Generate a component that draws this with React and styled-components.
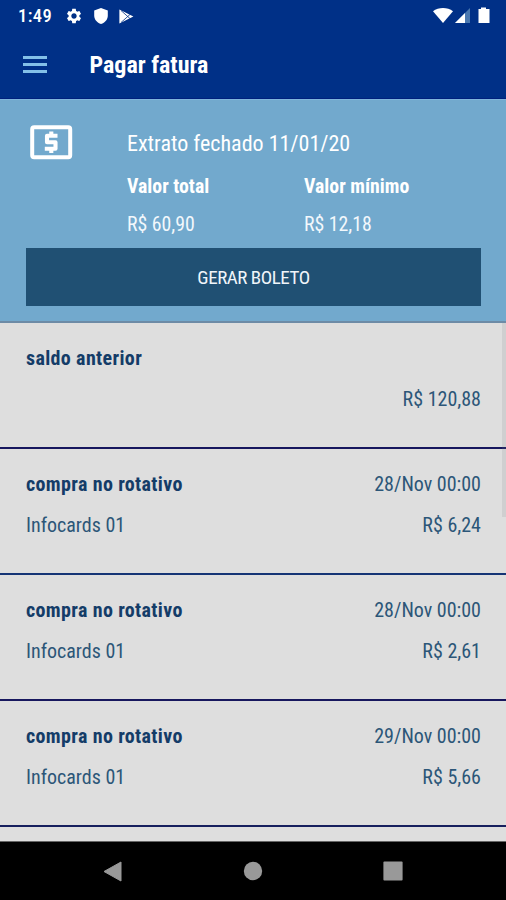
import styled, { createGlobalStyle } from "styled-components";

const GlobalStyle = createGlobalStyle`
    * {
        box-sizing: border-box;
    }
    body {
        margin: 0;
        background-color: #000;
        font-family: "Roboto Condensed", Roboto, sans-serif;
        font-stretch: 75%;
    }
`;

const Screen = styled.div`
    display: flex;
    flex-direction: column;
    width: 506px;
    height: 900px;
    overflow: hidden;
`;

const StatusBar = styled.div`
    display: flex;
    align-items: center;
    height: 32px;
    padding: 0 16px 0 18px;
    background-color: #003087;
    color: #fff;
`;

const Clock = styled.span`
    width: 47px;
    font-size: 18.5px;
    font-weight: 500;
    font-stretch: 100%;
    letter-spacing: 0.4px;
    line-height: 32px;
`;

const StatusIcons = styled.div`
    display: flex;
    align-items: center;
    gap: ${({ $gap }) => $gap}px;
    margin-left: ${({ $end }) => ($end ? "auto" : "0")};
`;

const AppBar = styled.header`
    display: flex;
    align-items: center;
    height: 67px;
    padding: 0 23px;
    background-color: #003087;
    border-bottom: 1px solid #00207c;
`;

const MenuButton = styled.div`
    display: flex;
    flex-direction: column;
    gap: 4px;
    width: 24px;
    margin: -2px 42.5px 0 0;
`;

const MenuLine = styled.span`
    height: 3px;
    background-color: #83c0e8;
`;

const Title = styled.h1`
    margin: 0;
    color: #fff;
    font-size: 24px;
    font-weight: 700;
    line-height: 28px;
`;

const Summary = styled.section`
    height: 224px;
    padding: 25px 25px 0 26px;
    background-color: #72a9cd;
    border-top: 1px solid #7eb5dc;
    border-bottom: 2px solid #6d8ba6;
    color: #fff;
`;

const SummaryTop = styled.div`
    display: grid;
    grid-template-columns: 101px 177px 1fr;
    grid-template-rows: 40px 38px 45px;
`;

const IconCell = styled.div`
    grid-row: span 3;
    padding-left: 4px;
`;

const Statement = styled.div`
    grid-column: span 2;
    font-size: 22px;
    line-height: 37px;
`;

const Amount = styled.div`
    color: ${({ $bold }) => ($bold ? "#fff" : "#f2f8fc")};
    font-size: 19.8px;
    font-weight: ${({ $bold }) => ($bold ? 700 : 400)};
    line-height: 43px;
`;

const PayButton = styled.button`
    display: block;
    width: 455px;
    height: 58px;
    padding: 2px 0 0;
    border: 0;
    background-color: #205073;
    color: #f0f5fa;
    font-family: inherit;
    font-stretch: inherit;
    font-size: 19px;
    letter-spacing: -0.45px;
    line-height: 56px;
`;

const List = styled.div`
    display: flex;
    flex: 1;
    position: relative;
    flex-direction: column;
    min-height: 0;
    overflow: hidden;
    background-color: #dedede;
`;

const Entry = styled.div`
    flex: none;
    height: 126px;
    padding: 15px 25px 0 26px;
    border-bottom: 2px solid ${({ $line }) => $line};
    color: #2c5678;
`;

const Line = styled.div`
    display: flex;
    justify-content: space-between;
    height: 41px;
    font-size: 20px;
    line-height: 41px;
`;

const Kind = styled.strong`
    color: #143c68;
    font-weight: 700;
    letter-spacing: 0.35px;
`;

const Scrollbar = styled.div`
    position: absolute;
    top: 0;
    right: 0;
    width: 4px;
    height: 194px;
    background-color: rgba(120, 120, 125, 0.15);
`;

const NavBar = styled.nav`
    display: flex;
    align-items: center;
    justify-content: center;
    gap: 120px;
    height: 59px;
    border-top: 1px solid #666;
    background-color: #000;
`;

const entries = [
    { kind: "saldo anterior", date: "", card: "", value: "R$ 120,88", line: "#17175e" },
    { kind: "compra no rotativo", date: "28/Nov 00:00", card: "Infocards 01", value: "R$ 6,24", line: "#153475" },
    { kind: "compra no rotativo", date: "28/Nov 00:00", card: "Infocards 01", value: "R$ 2,61", line: "#17175e" },
    { kind: "compra no rotativo", date: "29/Nov 00:00", card: "Infocards 01", value: "R$ 5,66", line: "#17205e" },
];

const GearIcon = () => (
    <svg width="18" height="18" viewBox="0 0 24 24" fill="#fff">
        <path d="M19.14 12.94c.04-.3.06-.61.06-.94 0-.32-.02-.64-.07-.94l2.03-1.58c.18-.14.23-.41.12-.61l-1.92-3.32c-.12-.22-.37-.29-.59-.22l-2.39.96c-.5-.38-1.03-.7-1.62-.94l-.36-2.54c-.04-.24-.24-.41-.48-.41h-3.84c-.24 0-.43.17-.47.41l-.36 2.54c-.59.24-1.13.57-1.62.94l-2.39-.96c-.22-.08-.47 0-.59.22L2.74 8.87c-.12.21-.08.47.12.61l2.03 1.58c-.05.3-.09.63-.09.94s.02.64.07.94l-2.03 1.58c-.18.14-.23.41-.12.61l1.92 3.32c.12.22.37.29.59.22l2.39-.96c.5.38 1.03.7 1.62.94l.36 2.54c.05.24.24.41.48.41h3.84c.24 0 .44-.17.47-.41l.36-2.54c.59-.24 1.13-.56 1.62-.94l2.39.96c.22.08.47 0 .59-.22l1.92-3.32c.12-.22.07-.47-.12-.61l-2.01-1.58zM12 15.6c-1.98 0-3.6-1.62-3.6-3.6s1.62-3.6 3.6-3.6 3.6 1.62 3.6 3.6-1.62 3.6-3.6 3.6z" />
    </svg>
);

const ShieldIcon = () => (
    <svg width="14" height="16" viewBox="0 0 14 16" fill="#fff">
        <path d="M7 0 13.8 2.5V7.5C13.8 11.5 11 14.8 7 16 3 14.8.2 11.5.2 7.5V2.5Z" />
    </svg>
);

const PlayIcon = () => (
    <svg width="15" height="15" viewBox="0 0 15 15">
        <path d="M.4.5 14.4 7.5.4 14.6Z" fill="#fff" />
        <path d="M2 1.5 11.5 10M2 13.5 11.5 5" stroke="#003087" strokeWidth="0.8" fill="none" />
    </svg>
);

const SignalIcons = () => (
    <svg width="57" height="18" viewBox="0 0 57 18">
        <path d="M0 4.2C5.5-.2 14.5-.2 20 4.2L10 16Z" fill="#fff" />
        <path d="M22 16 37 1V16Z" fill="#4a78b0" />
        <path d="M22 16 32 6V16Z" fill="#fff" />
        <path d="M45.5 2H48V.5H53V2H56.5V16H45.5Z" fill="#fff" />
    </svg>
);

const MoneyIcon = () => (
    <svg width="43" height="35" viewBox="0 0 43 35" fill="none">
        <rect x="2.2" y="2.2" width="38" height="30" rx="2" stroke="#fff" strokeWidth="4" />
        <path d="M27.5 10.8H17V17.2H25.5V23.8H14.8M21.3 6.5V11M21.3 24V28" stroke="#fff" strokeWidth="4.1" strokeLinejoin="round" />
    </svg>
);

const BackIcon = () => (
    <svg width="20" height="21" viewBox="0 0 20 21">
        <path d="M1 10.5 18 1V20Z" fill="#999" stroke="#999" strokeLinejoin="round" />
    </svg>
);

const HomeIcon = () => (
    <svg width="20" height="20" viewBox="0 0 20 20">
        <circle cx="10" cy="10" r="9.2" fill="#999" />
    </svg>
);

const RecentsIcon = () => (
    <svg width="20" height="20" viewBox="0 0 20 20">
        <rect x="0.4" y="0.4" width="19.2" height="19.2" rx="1" fill="#999" />
    </svg>
);

const App = () => {
    return <>
        <GlobalStyle />
        <Screen>
            <StatusBar>
                <Clock>1:49</Clock>
                <StatusIcons $gap={11}>
                    <GearIcon />
                    <ShieldIcon />
                    <PlayIcon />
                </StatusIcons>
                <StatusIcons $end>
                    <SignalIcons />
                </StatusIcons>
            </StatusBar>
            <AppBar>
                <MenuButton>
                    <MenuLine />
                    <MenuLine />
                    <MenuLine />
                </MenuButton>
                <Title>Pagar fatura</Title>
            </AppBar>
            <Summary>
                <SummaryTop>
                    <IconCell>
                        <MoneyIcon />
                    </IconCell>
                    <Statement>Extrato fechado 11/01/20</Statement>
                    <Amount $bold>Valor total</Amount>
                    <Amount $bold>Valor mínimo</Amount>
                    <Amount>R$ 60,90</Amount>
                    <Amount>R$ 12,18</Amount>
                </SummaryTop>
                <PayButton>GERAR BOLETO</PayButton>
            </Summary>
            <List>
                {
                    entries.map(({ kind, date, card, value, line }, i) => (
                        <Entry key={`entry${i}`} $line={line}>
                            <Line>
                                <Kind>{kind}</Kind>
                                <span>{date}</span>
                            </Line>
                            <Line>
                                <span>{card}</span>
                                <span>{value}</span>
                            </Line>
                        </Entry>
                    ))
                }
                <Scrollbar />
            </List>
            <NavBar>
                <BackIcon />
                <HomeIcon />
                <RecentsIcon />
            </NavBar>
        </Screen>
    </>
}

export default App;
